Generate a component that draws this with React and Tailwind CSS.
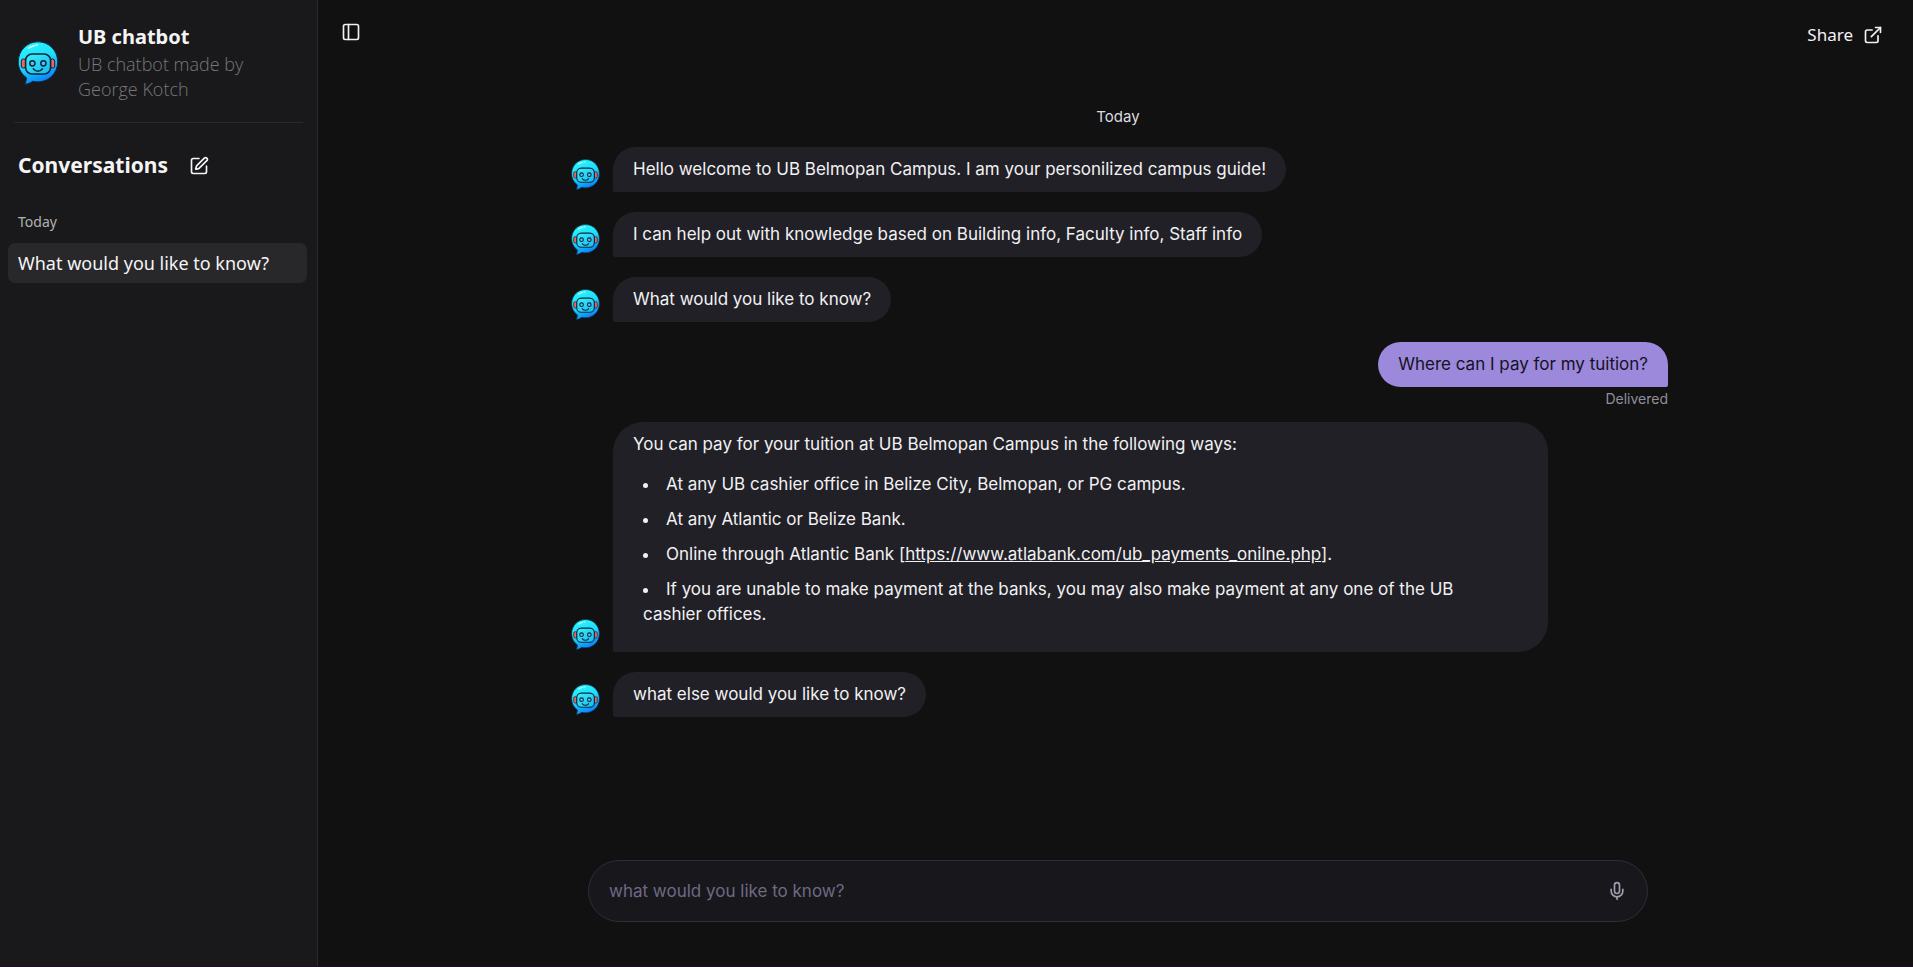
import { SquarePen, ExternalLink, Mic, PanelLeft } from "lucide-react";

function BotAvatar({ className }) {
  return (
    <svg viewBox="0 0 44 46" className={className} aria-hidden="true">
      <defs>
        <linearGradient id="bubble" x1="0.3" y1="0" x2="0.7" y2="1">
          <stop offset="0" stopColor="#2af6fc" />
          <stop offset="0.45" stopColor="#1fdcfa" />
          <stop offset="0.75" stopColor="#10a4fb" />
          <stop offset="1" stopColor="#0a70f8" />
        </linearGradient>
        <linearGradient id="face" x1="0" y1="0" x2="1" y2="1">
          <stop offset="0" stopColor="#3cf0f8" />
          <stop offset="1" stopColor="#17b8f0" />
        </linearGradient>
      </defs>
      <path
        d="M22 1.800C11 1.800 2.300 10.500 2.300 21.800c0 6.600 3 12.200 8.200 16-.2 2.600-.7 4.600-1.700 6.400 3.300-.2 6-1.400 8-3 1.700.5 3.400.7 5.200.7 11 0 19.700-8.800 19.700-20.100S33 1.800 22 1.800Z"
        fill="url(#bubble)"
        stroke="#0b2c48"
        strokeWidth="1"
      />
      <path d="M12.500 8.200c2-1.400 3.600-2 5.500-2.500M20 5.200l1-.1" stroke="#d2fdff" strokeWidth="1.600" strokeLinecap="round" fill="none" />
      <rect x="5.300" y="19" width="4.500" height="9" rx="2" fill="#f4605e" stroke="#08283c" strokeWidth="1" />
      <rect x="34.200" y="19" width="4.500" height="9" rx="2" fill="#f4605e" stroke="#08283c" strokeWidth="1" />
      <rect x="9.600" y="14" width="25" height="20" rx="6.500" fill="url(#face)" stroke="#08283c" strokeWidth="1.600" />
      <circle cx="16.400" cy="23.300" r="2.600" fill="#59bdf0" stroke="#08283c" strokeWidth="1.500" />
      <circle cx="27.400" cy="23.300" r="2.600" fill="#59bdf0" stroke="#08283c" strokeWidth="1.500" />
      <path d="M17.300 28.800c2.600 3.300 6.600 3.300 9.200 0" stroke="#08283c" strokeWidth="1.500" strokeLinecap="round" fill="none" />
    </svg>
  );
}

function BotMessage({ children, wide }) {
  return (
    <div className="flex items-end">
      <BotAvatar className="mr-[12px] mb-px ml-[2px] h-[33px] w-[31px] shrink-0" />
      <div
        className={
          wide
            ? "max-w-[85%] rounded-[30px] rounded-bl-[2px] bg-[#212026] px-5 py-[10px]"
            : "max-w-[85%] rounded-[23px] rounded-bl-[2px] bg-[#212026] px-5 py-[10px]"
        }
      >
        {children}
      </div>
    </div>
  );
}

function Sidebar() {
  return (
    <aside className="flex w-[318px] shrink-0 flex-col border-r border-[#28282b] bg-[#19191b] font-['Noto_Sans','Open_Sans',sans-serif] text-[#f4f4f5]">
      <header className="mx-[14px] flex items-center gap-[18px] border-b border-[#29292c] pt-6 pb-5">
        <BotAvatar className="ml-[2px] h-[46px] w-[44px] shrink-0" />
        <div>
          <h1 className="pb-[2px] text-[20px] leading-[26px] font-bold">UB chatbot</h1>
          <p className="font-['Open_Sans','Noto_Sans',sans-serif] text-[18px] leading-[25px] font-light text-[#77777c]">
            UB chatbot made by George Kotch
          </p>
        </div>
      </header>
      <div className="flex items-center gap-[21px] px-[18px] pt-[27px]">
        <h2 className="pb-[2px] text-[21px] leading-[30px] font-bold">Conversations</h2>
        <button type="button" aria-label="New conversation" className="flex">
          <SquarePen size={20} strokeWidth={2} />
        </button>
      </div>
      <h3 className="px-[18px] pt-[30px] text-[14px] leading-5 text-[#b2b2b6]">Today</h3>
      <nav className="pt-[11px] pr-[10px] pl-2">
        <a href="#conversation" className="block h-10 rounded-[7px] bg-[#28282a] px-[10px] text-[18px] leading-10">
          What would you like to know?
        </a>
      </nav>
    </aside>
  );
}

export default function App() {
  return (
    <div className="flex min-h-screen border-b border-[#1b0f24] bg-[#111111] text-[#f1f1f3]">
      <Sidebar />
      <main className="flex min-w-0 flex-1 flex-col pl-[5px] font-[Inter,Roboto,sans-serif] text-[17px] leading-[25px]">
        <header className="flex items-start justify-between pt-[22px] pr-[30px] pl-[18px] font-['Noto_Sans','Open_Sans',sans-serif]">
          <button type="button" aria-label="Toggle sidebar" className="flex">
            <PanelLeft size={20} strokeWidth={2} />
          </button>
          <button type="button" className="flex items-center gap-[10px]">
            Share
            <ExternalLink size={20} strokeWidth={2} />
          </button>
        </header>
        <section aria-label="Messages" className="mx-auto mt-[60px] flex w-full max-w-[1100px] flex-1 flex-col gap-5">
          <p className="text-center text-[15px] leading-5 text-[#dcdce0]">Today</p>
          <BotMessage>Hello welcome to UB Belmopan Campus. I am your personilized campus guide!</BotMessage>
          <BotMessage>I can help out with knowledge based on Building info, Faculty info, Staff info</BotMessage>
          <BotMessage>What would you like to know?</BotMessage>
          <div className="-mb-[7px] flex flex-col items-end gap-[2px]">
            <div className="max-w-[85%] rounded-[23px] rounded-br-[2px] bg-[#9c89dc] px-5 py-[10px] text-[#15121f]">
              Where can I pay for my tuition?
            </div>
            <p className="text-[14px] leading-5 text-[#918e9c]">Delivered</p>
          </div>
          <BotMessage wide>
            <p>You can pay for your tuition at UB Belmopan Campus in the following ways:</p>
            <ul className="my-[15px] flex list-inside list-disc flex-col gap-[10px] pr-5 pl-[10px]">
              <li>At any UB cashier office in Belize City, Belmopan, or PG campus.</li>
              <li>At any Atlantic or Belize Bank.</li>
              <li>
                Online through Atlantic Bank [
                <a href="#payments" className="underline">
                  https://www.atlabank.com/ub_payments_onilne.php
                </a>
                ].
              </li>
              <li>
                If you are unable to make payment at the banks, you may also make payment at any one of the UB cashier
                offices.
              </li>
            </ul>
          </BotMessage>
          <BotMessage>what else would you like to know?</BotMessage>
        </section>
        <form className="mx-auto mb-11 flex h-[62px] w-full max-w-[1060px] items-center rounded-full border border-[#2f2d39] bg-[#18171c] pr-5 pl-5">
          <input
            type="text"
            aria-label="Message"
            placeholder="what would you like to know?"
            className="min-w-0 flex-1 bg-transparent outline-none placeholder:text-[#6f6984]"
          />
          <button type="button" aria-label="Record voice" className="flex text-[#a09cb0]">
            <Mic size={20} />
          </button>
        </form>
      </main>
    </div>
  );
}
